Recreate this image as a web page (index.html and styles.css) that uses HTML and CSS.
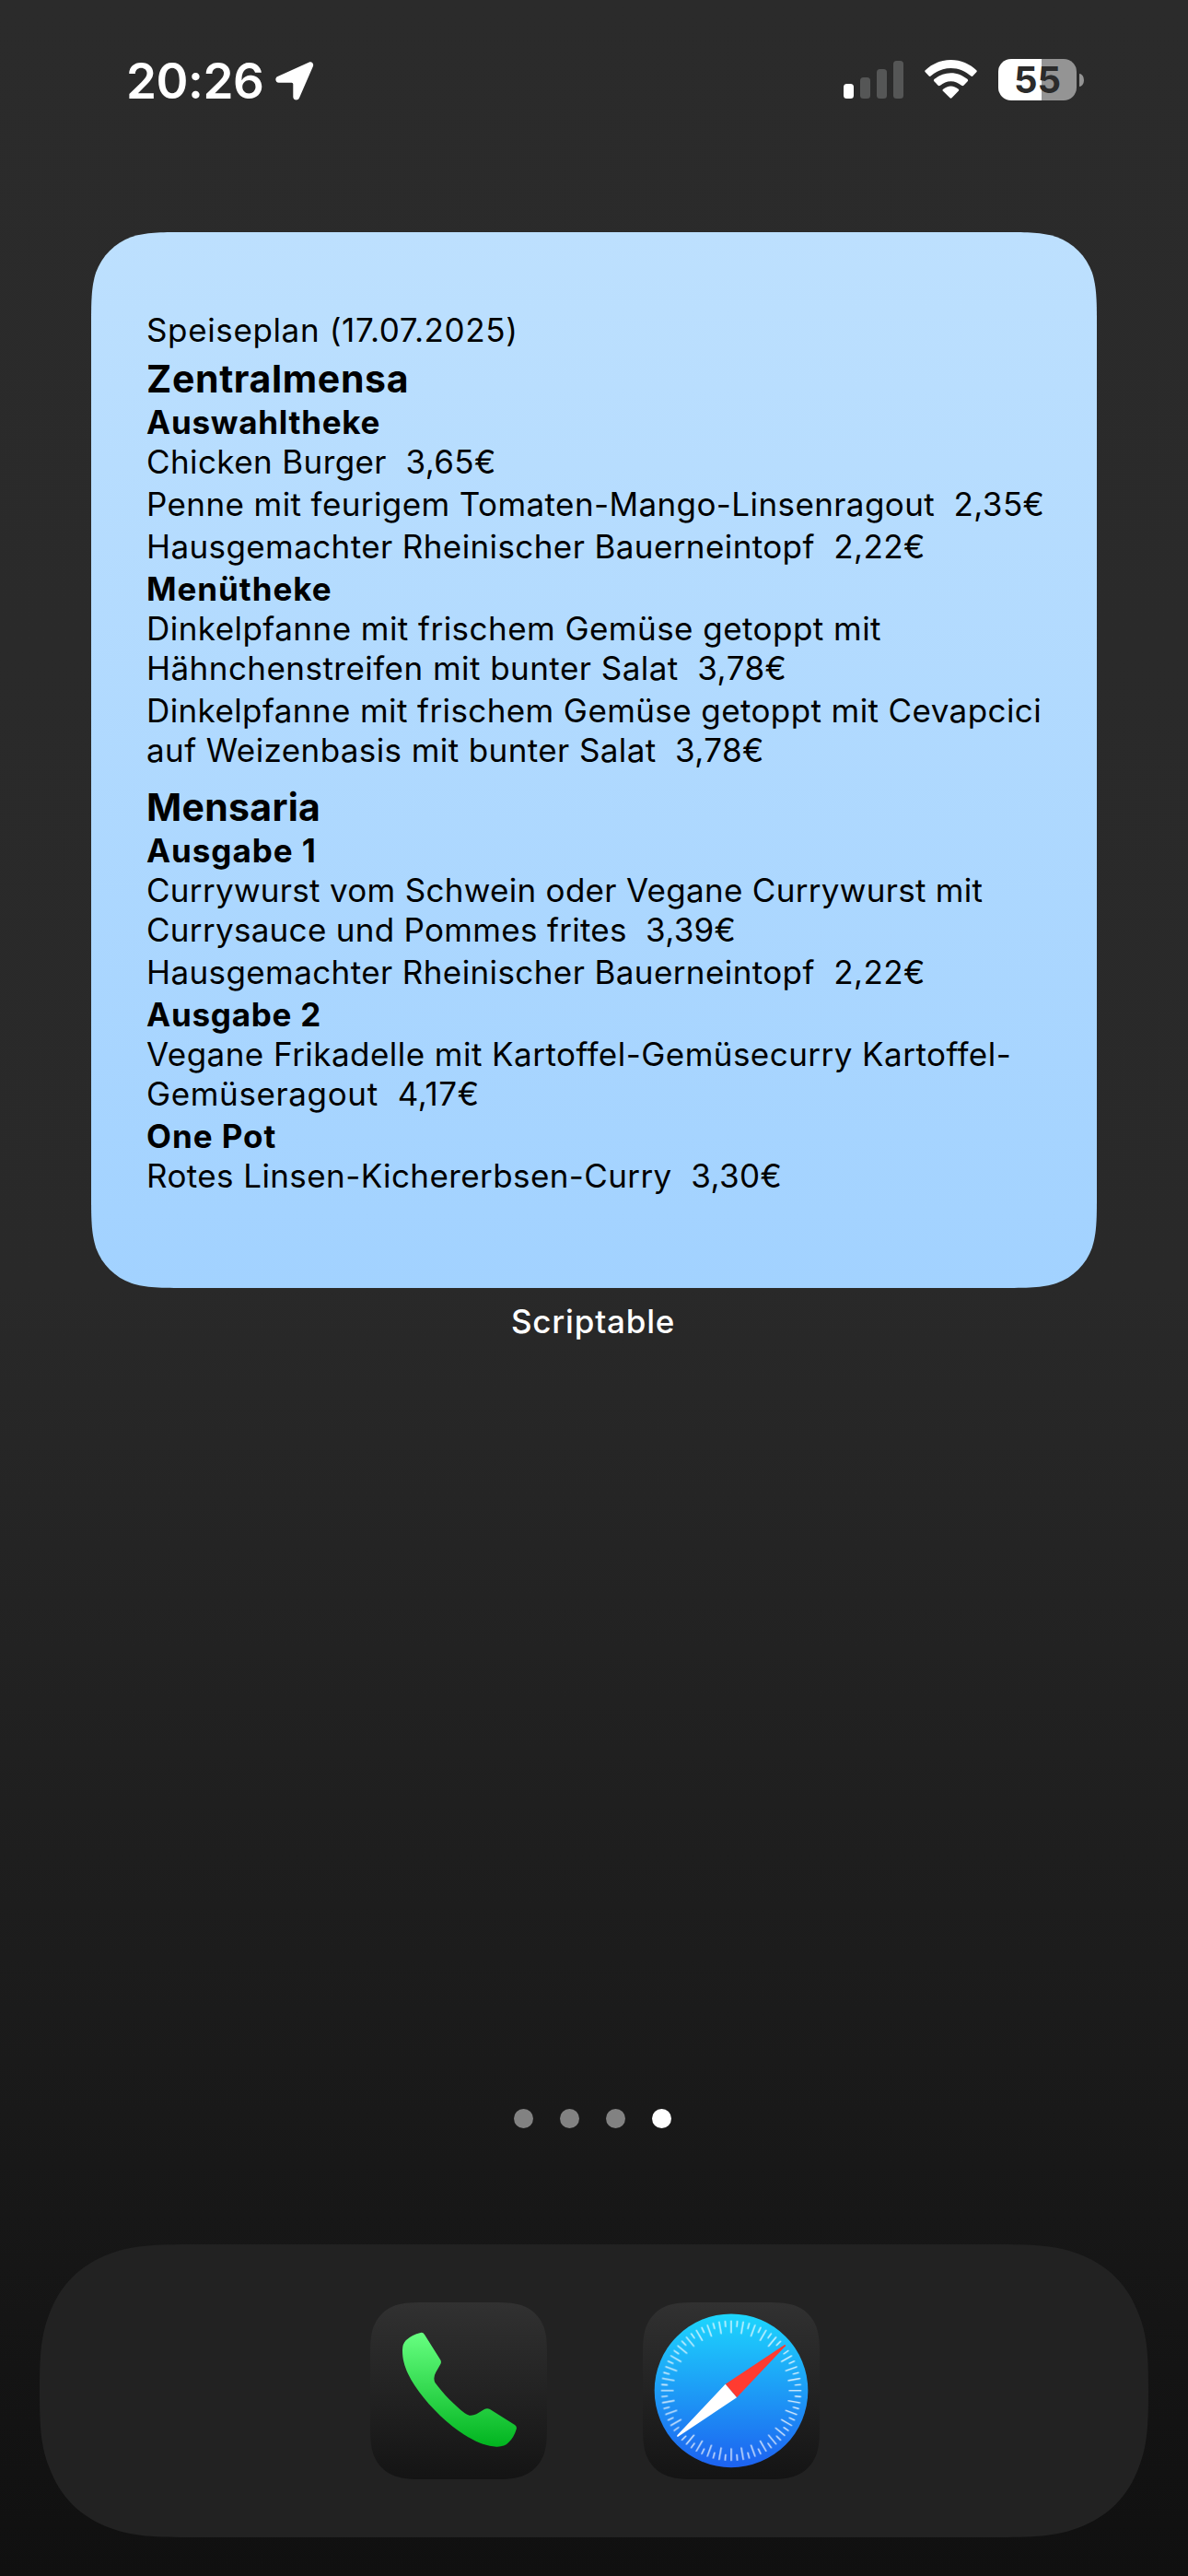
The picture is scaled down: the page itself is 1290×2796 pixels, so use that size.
FILE: index.html
```html
<!DOCTYPE html>
<html lang="de">
<head>
<meta charset="utf-8">
<title>Home</title>
<link rel="stylesheet" href="styles.css">
</head>
<body>
<header class="status">
  <div class="status-left">
    <span class="clock">20:26</span>
    <svg class="location" viewBox="0 0 42 42"><path d="M36.8.6C39.600-.4 42 2 40.900 5L26 39.200C24.500 42.800 19.300 41.800 19.300 38.200V24.200Q19.300 22.700 17.800 22.700H3.800C.100 22.700-1.100 17.600 2.500 16Z"/></svg>
  </div>
  <div class="status-right">
    <svg class="signal" viewBox="0 0 65 41">
      <rect x="0" y="25" width="11" height="16" rx="3.500" class="on"/>
      <rect x="18" y="18" width="11" height="23" rx="3.500"/>
      <rect x="36" y="9" width="11" height="32" rx="3.500"/>
      <rect x="54" y="0" width="11" height="41" rx="3.500"/>
    </svg>
    <svg class="wifi" viewBox="342 75 172 127">
      <path d="M428 75C461 75 490 88 512 109Q515 112 512 115L500 128Q497 131 494 128C476 112 453 102 428 102S380 112 362 128Q359 131 356 128L344 115Q341 112 344 109C366 88 395 75 428 75Z"/>
      <path d="M428 118C449 118 467 126 482 138Q486 142 483 145L470 159Q467 162 463 159C453 150 441 145 428 145S403 150 393 159Q389 162 386 159L373 145Q370 142 374 138C389 126 407 118 428 118Z"/>
      <path d="M428 161C437 161 446 165 453 171Q456 174 453 177L431 200Q428 203 425 200L402 177Q399 174 403 171C410 165 419 161 428 161Z"/>
    </svg>
    <div class="battery"><span class="cell">55</span><span class="cap"></span></div>
  </div>
</header>

<main class="widget-area">
  <section class="widget">
    <p class="row wide">Speiseplan (17.07.2025)</p>
    <h1>Zentralmensa</h1>
    <h2>Auswahltheke</h2>
    <p class="row">Chicken Burger&nbsp; 3,65€</p>
    <p class="row">Penne mit feurigem Tomaten-Mango-Linsenragout&nbsp; 2,35€</p>
    <p class="row">Hausgemachter Rheinischer Bauerneintopf&nbsp; 2,22€</p>
    <h2 class="loose">Menütheke</h2>
    <p class="row medium">Dinkelpfanne mit frischem Gemüse getoppt mit<br>Hähnchenstreifen mit bunter Salat&nbsp; 3,78€</p>
    <p class="row">Dinkelpfanne mit frischem Gemüse getoppt mit Cevapcici<br>auf Weizenbasis mit bunter Salat&nbsp; 3,78€</p>
    <h1 class="next">Mensaria</h1>
    <h2 class="loose">Ausgabe 1</h2>
    <p class="row tight">Currywurst vom Schwein oder Vegane Currywurst mit<br>Currysauce und Pommes frites&nbsp; 3,39€</p>
    <p class="row">Hausgemachter Rheinischer Bauerneintopf&nbsp; 2,22€</p>
    <h2>Ausgabe 2</h2>
    <p class="row medium">Vegane Frikadelle mit Kartoffel-Gemüsecurry Kartoffel-<br><span class="wide">Gemüseragout&nbsp; 4,17€</span></p>
    <h2 class="loose">One Pot</h2>
    <p class="row">Rotes Linsen-Kichererbsen-Curry&nbsp; 3,30€</p>
  </section>
  <p class="widget-name">Scriptable</p>
</main>

<nav class="pages"><i></i><i></i><i></i><i class="current"></i></nav>

<footer class="dock">
  <svg class="dock-bg" viewBox="0 0 1204 318"><path d="M168 0H1036C1079 0 1104 1 1127 10C1160 22 1182 44 1194 77C1203 100 1204 123 1204 159S1203 218 1194 241C1182 274 1160 296 1127 308C1104 317 1079 318 1036 318H168C125 318 100 317 77 308C44 296 22 274 10 241C1 218 0 195 0 159S1 100 10 77C22 44 44 22 77 10C100 1 125 0 168 0Z"/></svg>
  <svg class="app" viewBox="66 57 576 576">
    <defs>
      <linearGradient id="tile" x1="0" y1="0" x2="0" y2="1"><stop offset="0" stop-color="#313131"/><stop offset="1" stop-color="#141414"/></linearGradient>
      <linearGradient id="green" x1="0" y1="0" x2="0" y2="1"><stop offset="0" stop-color="#67ff81"/><stop offset="1" stop-color="#01b41f"/></linearGradient>
    </defs>
    <path id="tile-shape" fill="url(#tile)" d="M263 57H445C502 57 530 57 560 67C594 79 620 105 632 139C642 169 642 197 642 254V436C642 493 642 521 632 551C620 585 594 611 560 623C530 633 502 633 445 633H263C206 633 178 633 148 623C114 611 88 585 76 551C66 521 66 493 66 436V254C66 197 66 169 76 139C88 105 114 79 148 67C178 57 206 57 263 57Z"/>
    <path fill="url(#green)" d="M230 156Q238 154 243 162L294 243Q299 250 295 258L280 284Q270 302 277 318C304 355 338 389 374 418Q390 431 412 421L438 405Q447 400 456 405L537 456Q545 461 542 470Q534 497 516 514Q503 528 477 527C430 525 375 496 314 444C260 396 213 340 190 291C177 263 171 240 171 215Q170 192 184 179Q202 163 230 156Z"/>
  </svg>
  <svg class="app" viewBox="54 57 576 576">
    <defs>
      <linearGradient id="blue" x1="0" y1="0" x2="0" y2="1"><stop offset="0" stop-color="#1dd6fd"/><stop offset=".5" stop-color="#1d9cf6"/><stop offset="1" stop-color="#1d62f0"/></linearGradient>
      <g id="pair"><path d="M0-227V-189"/><path d="M0-227V-209" transform="rotate(-5)"/></g>
      <g id="half-dial">
        <use href="#pair" transform="rotate(60)"/><use href="#pair" transform="rotate(70)"/><use href="#pair" transform="rotate(80)"/><use href="#pair" transform="rotate(90)"/>
        <use href="#pair" transform="rotate(100)"/><use href="#pair" transform="rotate(110)"/><use href="#pair" transform="rotate(120)"/><use href="#pair" transform="rotate(130)"/>
        <use href="#pair" transform="rotate(140)"/><use href="#pair" transform="rotate(150)"/><use href="#pair" transform="rotate(160)"/><use href="#pair" transform="rotate(170)"/>
        <use href="#pair" transform="rotate(180)"/><use href="#pair" transform="rotate(190)"/><use href="#pair" transform="rotate(200)"/><use href="#pair" transform="rotate(210)"/>
        <use href="#pair" transform="rotate(220)"/><path d="M0-227V-209" transform="rotate(225)"/>
      </g>
    </defs>
    <use href="#tile-shape" x="-12"/>
    <circle cx="342" cy="344.500" r="250" fill="url(#blue)"/>
    <g class="ticks" transform="translate(342 344.500)"><use href="#half-dial"/><use href="#half-dial" transform="rotate(180)"/></g>
    <path fill="#ff3b30" d="M323 323L515 196Q520 193 519 199L360 367Z"/>
    <path fill="#fff" d="M323 323L360 367L169 494Q164 496 166 490Z"/>
  </svg>
</footer>
</body>
</html>
```
FILE: styles.css
```css
* { box-sizing: border-box; margin: 0; padding: 0; }

body {
  display: flex;
  flex-direction: column;
  width: 1290px;
  height: 2796px;
  overflow: hidden;
  font-family: Inter, "Liberation Sans", sans-serif;
  background: linear-gradient(#2b2b2b 0%, #292929 50%, #101010 100%);
}

svg { display: block; }

/* Status bar */
.status {
  display: flex;
  justify-content: space-between;
  height: 252px;
  padding: 56px 113px 0 137px;
}
.status-left, .status-right { display: flex; align-items: flex-start; }
.clock {
  width: 162px;
  font-size: 53px;
  line-height: 64px;
  font-weight: 600;
  letter-spacing: -0.45px;
  color: #fff;
}
.location { width: 42px; height: 42px; margin-top: 11px; fill: #fff; }
.signal { width: 65px; height: 41px; margin: 10px 23px 0 0; fill: #555656; }
.signal .on { fill: #fff; }
.wifi { width: 57px; height: 42px; margin: 9px 23px 0 0; fill: #fff; }
.battery { display: flex; align-items: center; gap: 3px; margin-top: 8px; }
.cell {
  width: 85px;
  height: 45px;
  border-radius: 14px;
  background: linear-gradient(90deg, #fff 47px, #949494 47px);
  font-size: 40px;
  line-height: 45px;
  font-weight: 700;
  text-align: center;
  color: #2b2b2b;
}
.cap { width: 5px; height: 14px; border-radius: 0 5px 5px 0 / 0 7px 7px 0; background: #949494; }

/* Menu widget */
.widget-area { height: 2037px; padding: 0 99px; }
.widget {
  height: 1146px;
  padding: 85px 0 0 60px;
  color: #000;
  white-space: nowrap;
  background: linear-gradient(#bde0fe, #a2d2ff);
  clip-path: path("M105.500 0H986.500C1016.900 0 1032.100 0 1048.400 5.200C1066.300 11.700 1080.300 25.700 1086.800 43.600C1092 59.900 1092 75.100 1092 105.500V1040.500C1092 1070.900 1092 1086.100 1086.800 1102.400C1080.300 1120.300 1066.300 1134.300 1048.400 1140.800C1032.100 1146 1016.900 1146 986.500 1146H105.500C75.100 1146 59.900 1146 43.600 1140.800C25.700 1134.300 11.700 1120.300 5.200 1102.400C0 1086.100 0 1070.900 0 1040.500V105.500C0 75.100 0 59.900 5.200 43.600C11.700 25.700 25.700 11.700 43.600 5.200C59.900 0 75.100 0 105.500 0Z");
}
.row { font-size: 35px; line-height: 43px; letter-spacing: 0.4px; }
.medium { letter-spacing: 0.46px; }
.tight { letter-spacing: 0.3px; }
.wide { letter-spacing: 0.63px; }
.row + .row, .row + h2 { margin-top: 3px; }
h1 { margin-top: 6px; font-size: 41px; line-height: 51px; font-weight: 700; letter-spacing: 0.65px; }
h1.next { margin-top: 15px; letter-spacing: 0.3px; }
h2 { font-size: 35px; line-height: 43px; font-weight: 700; letter-spacing: 0.75px; }
h2.loose { letter-spacing: 0.95px; }
.widget-name {
  margin-top: 15px;
  padding-right: 2px;
  font-size: 35px;
  line-height: 43px;
  font-weight: 500;
  letter-spacing: 0.8px;
  text-align: center;
  color: #fff;
}

/* Page indicator */
.pages { display: flex; gap: 29px; height: 147px; padding-left: 558px; }
.pages i { width: 21px; height: 21px; border-radius: 50%; background: #828282; }
.pages .current { background: #fff; }

/* Dock */
.dock {
  position: relative;
  display: flex;
  gap: 104px;
  width: 1204px;
  height: 318px;
  margin-left: 43px;
  padding: 63px 0 0 359px;
}
.dock-bg { position: absolute; inset: 0; width: 1204px; height: 318px; fill: #222; }
.app { position: relative; width: 192px; height: 192px; }
.ticks { fill: none; stroke: #fff; stroke-width: 4; stroke-linecap: round; opacity: 0.92; }
```
